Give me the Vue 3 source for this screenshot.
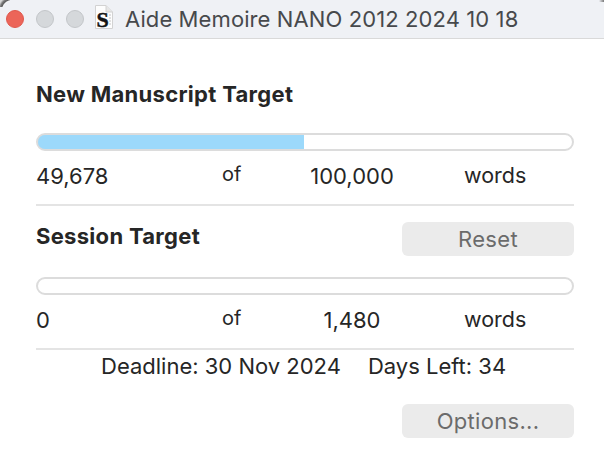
<script setup>
const rows = [
  { value: '49,678', total: '100,000', pct: 49.678 },
  { value: '0', total: '1,480', pct: 0 },
]
</script>

<template>
  <div class="win">
    <header class="titlebar">
      <span class="corner left"></span>
      <span class="corner right"></span>
      <span class="light red"></span>
      <span class="light"></span>
      <span class="light"></span>
      <svg class="doc" width="18" height="28" viewBox="0 0 18 28">
        <path d="M.5.5H11L17.500 7V23.500H.5Z" fill="#fdfdfd" stroke="#d2d2d2"/>
        <path d="M11 .5V7H17.500" fill="#e6e6e6" stroke="#d2d2d2"/>
        <path d="M14 10H16M14 13H16M14 16H16M14 19H16" stroke="#c4c4c4" fill="none"/>
        <text class="doc-s" x="1.500" y="22">S</text>
      </svg>
      <span class="title">Aide Memoire NANO 2012 2024 10 18</span>
    </header>
    <main class="body">
      <h2 class="h first">New Manuscript Target</h2>
      <div class="bar"><div class="fill" :style="{ width: `calc(${rows[0].pct}% + 3px)` }"></div></div>
      <div class="nums">
        <span class="n1">{{ rows[0].value }}</span><span class="n2">of</span><span class="n3">{{ rows[0].total }}</span><span class="n4">words</span>
      </div>
      <hr class="rule r1" />
      <div class="session">
        <h2 class="h">Session Target</h2>
        <button class="btn">Reset</button>
      </div>
      <div class="bar b2"></div>
      <div class="nums">
        <span class="n1">{{ rows[1].value }}</span><span class="n2">of</span><span class="n3">{{ rows[1].total }}</span><span class="n4">words</span>
      </div>
      <hr class="rule r2" />
      <div class="deadline"><span>Deadline: 30 Nov 2024</span><span>Days Left: 34</span></div>
      <div class="foot"><button class="btn">Options...</button></div>
    </main>
  </div>
</template>

<style>
html, body { margin: 0; background: #fff; }
</style>

<style scoped>
.win { width: 604px; height: 472px; overflow: hidden; background: #fff; font-family: Inter, "Liberation Sans", sans-serif; color: #262626; position: relative; }
.titlebar { height: 38px; box-sizing: content-box; border-bottom: 1px solid #d9d9d9; background: #eff1f5; display: flex; align-items: center; padding-left: 6px; position: relative; }
.corner { position: absolute; top: 0; width: 10px; height: 7px; }
.corner.left { left: 0; background: radial-gradient(circle at 12px 10px, transparent 8.5px, #f4f5f7 9px, #f4f5f7 9.500px, #5e5e5e 10.500px, #777 12px, #d8d8d8 14px); }
.corner.right { right: 0; width: 5px; height: 2px; background: linear-gradient(to right, #eff1f5, #777); }
.light { width: 18px; height: 18px; border-radius: 50%; background: #d5d8db; border: 1px solid #c3c6c9; box-sizing: border-box; margin-right: 12px; flex: none; }
.light.red { background: #ec6559; border-color: #e0574c; }
.doc { margin-left: -1px; flex: none; }
.doc-s { font: 700 22px "Liberation Serif", serif; fill: #141414; stroke: #141414; stroke-width: 0.5px; }
.title { margin-left: 12px; font-size: 22px; letter-spacing: 0.1px; color: #47494c; white-space: nowrap; }
.body { padding: 0 30px 0 36px; }
.h { margin: 0; font-size: 22px; line-height: 24px; font-weight: 700; letter-spacing: 0.3px; color: #262626; }
.first { margin-top: 43px; }
.bar { height: 18px; margin-top: 27px; border: 2px solid #dcdcdc; border-radius: 9px; box-sizing: border-box; overflow: hidden; position: relative; }
.b2 { margin-top: 21px; }
.fill { position: absolute; left: -2px; top: -2px; bottom: -2px; background: #9cd9fb; border: 2px solid #84bbd9; border-right: 0; border-radius: 9px 0 0 9px; box-sizing: border-box; }
.nums { display: grid; grid-template-columns: 186px 70px 120px 1fr; height: 24px; margin-top: 13px; font-size: 22px; line-height: 24px; white-space: nowrap; }
.n2 { font-size: 20px; line-height: 22px; margin-top: -1px; }
.n3 { text-align: center; }
.n4 { margin-left: 52px; font-size: 21.5px; margin-top: -1px; }
.rule { border: 0; height: 2px; background: #e4e4e4; margin: 0; }
.r1 { margin-top: 16px; }
.r2 { margin-top: 16px; }
.session { display: flex; justify-content: space-between; align-items: flex-start; margin-top: 16px; }
.session .h { margin-top: 2px; }
.btn { width: 172px; height: 34px; border: 0; border-radius: 6px; background: #ebebeb; color: #6b6b6b; font: 22px/24px Inter, "Liberation Sans", sans-serif; letter-spacing: 0.3px; padding: 0 0 1px; }
.deadline { display: flex; gap: 27px; margin-top: 4px; margin-left: 65px; font-size: 22px; line-height: 24px; white-space: nowrap; }
.foot { display: flex; justify-content: flex-end; margin-top: 26px; }
</style>
